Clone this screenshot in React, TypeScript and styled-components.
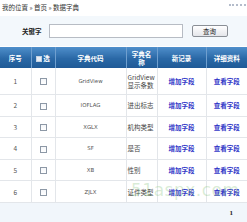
import React from 'react';
import styled, { createGlobalStyle } from 'styled-components';

const GlobalStyle = createGlobalStyle`
  html, body {
    margin: 0;
    padding: 0;
    background: #fff;
  }
  body {
    font-family: "Noto Sans CJK SC", "Liberation Sans", sans-serif;
    font-size: 6.5px;
    color: #444;
    width: 247px;
    height: 222px;
    overflow: hidden;
  }
`;

type Row = { id: number; code: string; name: string };

const rows: Row[] = [
  { id: 1, code: 'GridView', name: 'GridView 显示条数' },
  { id: 2, code: 'IOFLAG', name: '进出标志' },
  { id: 3, code: 'XGLX', name: '机构类型' },
  { id: 4, code: 'SF', name: '是否' },
  { id: 5, code: 'XB', name: '性别' },
  { id: 6, code: 'ZJLX', name: '证件类型' },
];

export default function App() {
  return (
    <Page>
      <GlobalStyle />
      <Breadcrumb>
        <span>我的位置 » 首页 » 数据字典</span>
        <Dots />
      </Breadcrumb>
      <SearchBar>
        <Label>关键字</Label>
        <SearchInput type="text" />
        <SearchButton type="button">查询</SearchButton>
      </SearchBar>
      <Grid>
        <colgroup>
          <col style={{ width: 31 }} />
          <col style={{ width: 24 }} />
          <col style={{ width: 71 }} />
          <col style={{ width: 31 }} />
          <col style={{ width: 49 }} />
          <col style={{ width: 41 }} />
        </colgroup>
        <thead>
          <tr>
            <Th>序号</Th>
            <Th>
              <HeadCheck />选
            </Th>
            <Th>字典代码</Th>
            <Th>字典名称</Th>
            <Th>新记录</Th>
            <Th>详细资料</Th>
          </tr>
        </thead>
        <tbody>
          {rows.map((r) => (
            <tr key={r.id}>
              <Td $tall={r.id === 1}>{r.id}</Td>
              <Td>
                <Box />
              </Td>
              <Td $latin>{r.code}</Td>
              <NameTd>{r.name}</NameTd>
              <Td>
                <Link>增加字段</Link>
              </Td>
              <Td>
                <Link>查看字段</Link>
              </Td>
            </tr>
          ))}
        </tbody>
      </Grid>
      <Pager>
        <PageNo>1</PageNo>
      </Pager>
      <Watermark>51aspx.com</Watermark>
    </Page>
  );
}

const Page = styled.div`
  position: relative;
  width: 247px;
  height: 222px;
  overflow: hidden;
`;

const Breadcrumb = styled.div`
  display: flex;
  justify-content: space-between;
  align-items: flex-start;
  height: 16px;
  line-height: 14px;
  padding: 0 1px 0 2px;
  color: #333;
`;

const Dots = styled.span`
  width: 17px;
  margin-top: 4px;
  border-top: 2px dotted #b4bccb;
`;

const SearchBar = styled.div`
  display: flex;
  align-items: center;
  height: 30px;
  padding-left: 22px;
  background: #f3f8fc;
`;

const Label = styled.span`
  font-weight: bold;
  color: #222;
  margin-right: 7px;
`;

const SearchInput = styled.input`
  box-sizing: border-box;
  width: 134px;
  height: 14px;
  margin: 0 9px 0 0;
  padding: 0;
  border: 1px solid #b7bcc4;
  background: #fff;
`;

const SearchButton = styled.button`
  box-sizing: border-box;
  width: 36px;
  height: 12px;
  padding: 0;
  border: 1px solid #8a8f96;
  border-radius: 2px;
  background: linear-gradient(#ffffff, #e4e6ea);
  font-family: inherit;
  font-size: 6.5px;
  line-height: 10px;
  color: #222;
`;

const Grid = styled.table`
  width: 247px;
  margin-top: 1px;
  border-collapse: collapse;
  table-layout: fixed;
`;

const Th = styled.th`
  height: 21px;
  padding: 0 4px;
  font-weight: bold;
  line-height: 8px;
  color: #fff;
  text-align: center;
  background: linear-gradient(#4f8fcb, #2a68a6 55%, #1f5a96);
  border-left: 1px solid #6f9fcf;
  &:first-child {
    border-left: none;
  }
`;

const HeadCheck = styled.span`
  display: inline-block;
  width: 6px;
  height: 6px;
  margin-right: 1px;
  vertical-align: -1px;
  background: #e8edf4;
  border: 1px solid #c5d3e3;
  box-sizing: border-box;
`;

const Td = styled.td<{ $tall?: boolean; $latin?: boolean }>`
  height: ${(p) => (p.$tall ? '26px' : '20.6px')};
  padding: 0 2px;
  line-height: 8px;
  text-align: center;
  font-family: ${(p) =>
    p.$latin ? '"DejaVu Sans", "Liberation Sans", sans-serif' : 'inherit'};
  font-size: ${(p) => (p.$latin ? '5.4px' : 'inherit')};
  color: #555;
  border: 1px solid #e3e6ea;
  border-top: none;
  &:first-child {
    border-left: none;
  }
  &:last-child {
    border-right: none;
  }
`;

const NameTd = styled(Td)`
  padding: 0 0 0 1px;
  text-align: left;
  color: #444;
`;

const Box = styled.span`
  display: inline-block;
  width: 7px;
  height: 7px;
  box-sizing: border-box;
  border: 1px solid #8d98a6;
  background: linear-gradient(#f4f6f9, #fff);
  vertical-align: middle;
`;

const Link = styled.a`
  color: #3238c8;
  font-weight: bold;
  cursor: pointer;
`;

const Pager = styled.div`
  display: flex;
  justify-content: flex-end;
  align-items: center;
  height: 20px;
  padding-right: 14px;
  background: #f1f6fb;
`;

const PageNo = styled.span`
  font-family: "Liberation Serif", serif;
  font-weight: bold;
  font-size: 7px;
  color: #222;
`;

const Watermark = styled.div`
  position: absolute;
  left: 131px;
  top: 180px;
  font-family: "DejaVu Sans", sans-serif;
  font-size: 17px;
  letter-spacing: 0.5px;
  color: rgba(120, 190, 110, 0.28);
  pointer-events: none;
`;
